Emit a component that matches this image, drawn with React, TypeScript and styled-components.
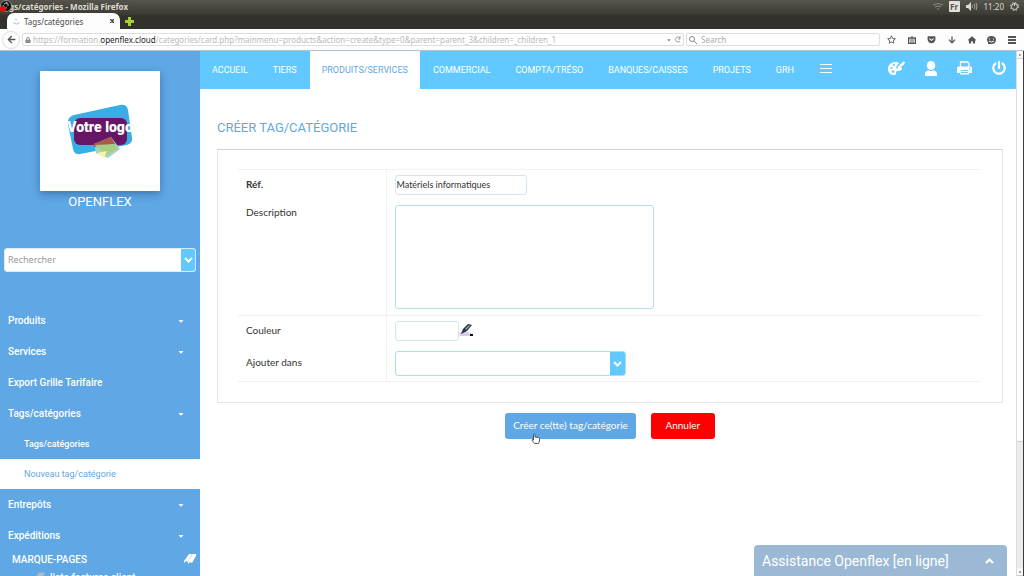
import React from "react";
import styled, { createGlobalStyle, css } from "styled-components";
import { FaArrowDown, FaArrowLeft, FaCaretDown, FaPowerOff, FaLock } from "react-icons/fa";
import { FaHouse, FaRegStar, FaGetPocket } from "react-icons/fa6";

const roboto = `Roboto, "Liberation Sans", sans-serif`;
const noto = `"Noto Sans", "Open Sans", sans-serif`;
const lato = `Lato, "Noto Sans", sans-serif`;
const blue = "#5fa7e5";
const sky = "#61c9ff";

const GlobalStyle = createGlobalStyle`
  * { box-sizing: border-box; }
  body { margin: 0; background: #fff; font-family: ${roboto}; overflow: hidden; }
  button, input, textarea, select { font: inherit; margin: 0; padding: 0; border: 0; background: none; outline: none; color: inherit; }
  a { color: inherit; text-decoration: none; }
  h1, p, ul { margin: 0; padding: 0; font-weight: 400; list-style: none; }
  svg { display: block; flex: none; }
`;

const Screen = styled.div`
  position: relative;
  display: flex;
  flex-direction: column;
  height: 100vh;
  overflow: hidden;
`;

/* ---------- browser window ---------- */

const WindowTop = styled.header`
  background: linear-gradient(#56544a, #3c3b35 14px, #32312c 16px, #32312c);
  font-family: ${noto};
  flex: none;
`;

const TitleBar = styled.div`
  display: flex;
  align-items: center;
  justify-content: space-between;
  height: 13px;
  padding: 0 5px 0 9px;
  color: #dfdbd2;
  font-size: 8px;
  line-height: 13px;
`;

const WindowTitle = styled.strong`
  font-weight: 700;
`;

const Tray = styled.div`
  display: flex;
  align-items: center;
  gap: 6px;
`;

const Lang = styled.span`
  width: 11px;
  height: 11px;
  border-radius: 1px;
  background: #e4e1da;
  color: #55534a;
  font-weight: 700;
  line-height: 11px;
  text-align: center;
`;

const TabStrip = styled.div`
  display: flex;
  align-items: center;
  gap: 5px;
  height: 16px;
  padding-left: 7px;
`;

const BrowserTab = styled.div`
  display: flex;
  align-items: center;
  gap: 4px;
  width: 113px;
  height: 16px;
  padding: 0 6px;
  border-radius: 7px 7px 0 0;
  background: #fdfdfd;
  color: #4a4a4a;
  font-size: 8px;
  line-height: 15px;
`;

const TabName = styled.span`
  flex: 1;
`;

const BarButton = styled.button`
  display: flex;
  align-items: center;
  justify-content: center;
`;

const AddressRow = styled.div`
  display: flex;
  align-items: center;
  gap: 2px;
  height: 22px;
  padding: 0 8px 0 2px;
  border-bottom: 1px solid #b7c3cc;
  background: #fdfdfd;
  color: #55544f;
`;

const BackButton = styled(BarButton)`
  width: 18px;
  height: 18px;
  border: 1px solid #dcdcdc;
  border-radius: 50%;
  background: #fff;
`;

const Field = styled.div<{ $grow?: boolean }>`
  display: flex;
  align-items: center;
  gap: 2px;
  height: 13px;
  border: 1px solid #dedede;
  border-radius: 2px;
  padding: 0 2px;
  background: #fff;
  color: #8c8c8c;
  font-size: 8px;
  line-height: 11px;
  ${(p) => (p.$grow ? css`flex: 1;` : css`flex: 0 1 194px;`)}
`;

const Url = styled.span`
  flex: 1;
  color: #b9b9b9;
  white-space: nowrap;
  overflow: hidden;
  b { font-weight: 400; color: #222; }
`;

const BrowserSearch = styled.input`
  flex: 1;
  min-width: 0;
  padding-left: 2px;
  &::placeholder { color: #aaa; opacity: 1; }
`;

const BrowserTools = styled.div`
  display: flex;
  align-items: center;
  justify-content: space-between;
  width: 134px;
  padding-left: 5px;
`;

/* ---------- page frame ---------- */

const Page = styled.div`
  display: flex;
  flex: 1;
  min-height: 0;
`;

const Sidebar = styled.aside`
  flex: none;
  width: 200px;
  overflow: hidden;
  background: ${blue};
  color: #fff;
`;

const Column = styled.div`
  display: flex;
  flex-direction: column;
  flex: 1;
  min-width: 0;
`;

const Scrollbar = styled.div`
  display: flex;
  flex-direction: column;
  align-items: center;
  width: 8px;
  border-right: 1px solid #3c3b37;
  border-left: 1px solid #dcdcda;
  background: #ececea;
`;

const ScrollCap = styled.div`
  width: 6px;
  height: 8px;
  padding: 3px 2px;
  border-bottom: 1px solid #d0d0ce;
  background: #fafafa;
  &::after { content: ""; display: block; width: 2px; height: 2px; background: #aaa; }
`;

const ScrollThumb = styled.div`
  width: 6px;
  flex: 0 0 73%;
  margin-bottom: auto;
  border-bottom: 1px solid #c8c8c6;
  border-radius: 0 0 2px 2px;
  background: #fff;
`;

/* ---------- sidebar ---------- */

const LogoCard = styled.div`
  display: flex;
  align-items: center;
  justify-content: center;
  width: 120px;
  height: 120px;
  margin: 20px auto 0;
  background: #fff;
  box-shadow: 0 3px 8px rgba(20, 60, 110, 0.45);
`;

const Company = styled.p`
  height: 22px;
  font-size: 13px;
  line-height: 22px;
  text-align: center;
`;

const SearchBox = styled.form`
  display: flex;
  height: 24px;
  margin: 35px 4px 33px;
  border: 1px solid #d8ecfa;
  border-radius: 3px;
  background: #fff;
  overflow: hidden;
`;

const SearchInput = styled.input`
  flex: 1;
  min-width: 0;
  padding: 0 0 2px 3px;
  font-family: ${noto};
  font-size: 9px;
  &::placeholder { color: #999; opacity: 1; }
`;

const ArrowButton = styled.button`
  display: flex;
  align-items: center;
  justify-content: center;
  width: 14px;
  background: ${sky};
  color: #fff;
`;

const MenuLink = styled.a`
  display: flex;
  align-items: center;
  justify-content: space-between;
  height: 31px;
  padding: 0 15px 0 8px;
  font-size: 10px;
  font-weight: 500;
`;

const SubLink = styled.a<{ $active?: boolean }>`
  display: flex;
  align-items: center;
  height: 30px;
  padding-left: 24px;
  font-size: 9px;
  font-weight: ${(p) => (p.$active ? 400 : 500)};
  background: ${(p) => (p.$active ? "#fff" : "transparent")};
  color: ${(p) => (p.$active ? blue : "#fff")};
`;

const Bookmarks = styled.div`
  display: flex;
  align-items: center;
  justify-content: space-between;
  height: 16px;
  padding: 0 4px 0 12px;
  font-size: 10px;
  font-weight: 500;
`;

const BookmarkLink = styled.a`
  display: flex;
  align-items: center;
  gap: 5px;
  height: 20px;
  padding-left: 34px;
  font-size: 10px;
  font-weight: 500;
`;

/* ---------- top menu ---------- */

const TopMenu = styled.nav`
  display: flex;
  justify-content: space-between;
  flex: none;
  height: 38px;
  background: ${sky};
  color: #fff;
`;

const MenuGroup = styled.div`
  display: flex;
  gap: 1px;
`;

const TopLink = styled.a<{ $active?: boolean }>`
  display: flex;
  align-items: center;
  padding: 0 12px;
  font-size: 9px;
  white-space: nowrap;
  background: ${(p) => (p.$active ? "#fff" : "transparent")};
  color: ${(p) => (p.$active ? blue : "#fff")};
`;

const MenuButton = styled.button`
  display: flex;
  align-items: center;
  padding: 0 13px 4px;
`;

const Actions = styled.div`
  display: flex;
  align-items: center;
  gap: 20px;
  padding: 0 10px 4px 0;
`;

/* ---------- form ---------- */

const Main = styled.main`
  flex: 1;
  padding: 28px 13px 0 17px;
`;

const Heading = styled.h1`
  height: 32px;
  font-size: 13px;
  line-height: 22px;
  color: ${blue};
`;

const Panel = styled.div`
  padding: 19px 21px 20px 20px;
  border: 1px solid #e6e6e6;
  border-top-color: #d2d2d2;
`;

const FormTable = styled.table`
  width: 100%;
  border-collapse: collapse;
  border-top: 1px solid #f2f2f2;
  font-family: ${lato};
  font-size: 10px;
  color: #333;
`;

const Row = styled.tr<{ $line?: boolean }>`
  border-bottom: ${(p) => (p.$line ? "1px solid #f0f0f0" : "0")};
`;

const LabelCell = styled.th<{ $strong?: boolean; $top?: boolean }>`
  width: 148px;
  padding: ${(p) => (p.$top ? "6px 0 0 8px" : "0 0 2px 8px")};
  border-right: 1px solid #f2f2f2;
  text-align: left;
  vertical-align: ${(p) => (p.$top ? "top" : "middle")};
  font-weight: ${(p) => (p.$strong ? 700 : 400)};
  line-height: 13px;
`;

const ValueCell = styled.td`
  padding: 5px 8px;
`;

const box = css`
  display: block;
  border: 1px solid #cfe8ee;
  border-radius: 3px;
  background: #fff;
`;

const TextInput = styled.input<{ $short?: boolean }>`
  ${box}
  width: ${(p) => (p.$short ? "64px" : "132px")};
  height: 20px;
  padding: 0 1px 1px;
  font-size: 9px;
`;

const TextArea = styled.textarea`
  ${box}
  width: 259px;
  height: 104px;
  border-color: #b4dfe4;
  margin-bottom: 1px;
  resize: none;
`;

const ColorLine = styled.div`
  display: flex;
`;

const SelectBox = styled.div`
  ${box}
  display: flex;
  width: 231px;
  height: 25px;
  border-color: #a9ddf5;
  overflow: hidden;
`;

const Select = styled.select`
  flex: 1;
  appearance: none;
`;

const SelectArrow = styled.span`
  display: flex;
  align-items: center;
  justify-content: center;
  width: 15px;
  background: ${sky};
  color: #fff;
`;

const Buttons = styled.div`
  display: flex;
  justify-content: center;
  gap: 15px;
  margin-top: 10px;
`;

const Button = styled.button<{ $danger?: boolean }>`
  position: relative;
  height: 26px;
  min-width: 64px;
  padding: 0 8px 3px;
  border-radius: 3px;
  background: ${(p) => (p.$danger ? "#f00" : blue)};
  color: #fff;
  font-family: ${lato};
  font-size: 10px;
  white-space: nowrap;
`;

const Pointer = styled.svg`
  position: absolute;
  left: 26px;
  top: 20px;
`;

const Recorder = styled.svg`
  position: absolute;
  left: 0;
  top: 0;
`;

const ChatButton = styled.button`
  position: absolute;
  right: 17px;
  bottom: 0;
  display: flex;
  align-items: center;
  justify-content: space-between;
  width: 253px;
  height: 31px;
  padding: 0 13px 0 8px;
  border-radius: 4px 4px 0 0;
  background: #9bb9d4;
  color: #fff;
  font-size: 14px;
`;

/* ---------- drawings ---------- */

const Chevron = ({ up }: { up?: boolean }) => (
  <svg width="9" height="6" viewBox="0 0 9 6" fill="none" stroke="currentColor" strokeWidth="2">
    <path d={up ? "M1 5 4.500 1.500 8 5" : "M1 1 4.500 4.500 8 1"} />
  </svg>
);

const Bars = ({ w, h, t }: { w: number; h: number; t: number }) => (
  <svg width={w} height={h} fill="currentColor">
    <rect width={w} height={t} />
    <rect y={(h - t) / 2} width={w} height={t} />
    <rect y={h - t} width={w} height={t} />
  </svg>
);

const Logo = () => (
  <svg width="68" height="56" viewBox="0 0 68 56">
    <path d="M8 12 54 2q7-1 8 5l4 28q1 5-5 7L14 51q-6 1-7-5L2 21q-1-7 6-9z" fill="#37aee6" />
    <rect x="8" y="15" width="53" height="27" rx="6" fill="#671665" />
    <path d="M28 41 45 34 54 46 42 55 30 50z" fill="#9ed3cf" />
    <path d="M28 41 45 34 49 41 28 44z" fill="#a85a48" />
    <path d="M29 42 49 41 52 46 40 52z" fill="#a8cd85" />
    <path d="M31 50 41 48 38 55z" fill="#f6f79a" />
    <text x="34" y="29" textAnchor="middle" fill="#fff" fontFamily="Roboto" fontWeight="900" fontSize="14">
      Votre logo
    </text>
  </svg>
);

const PaletteIcon = () => (
  <svg width="17" height="15" viewBox="0 0 17 15">
    <path d="M8 1C3 1 0 4 0 8c0 4 3 6 6 6 2 0 2-1 2-2 0-2 1-2 2-2 3 0 4-2 4-3L12 6l-3 2-1-2 3-4Q10 1 8 1z" fill="#fff" />
    <path d="M16.500 1 10 7" stroke="#fff" strokeWidth="2" />
    <path d="M12 3l4.500 0-4 3z" fill="#fff" />
    <g fill={sky}>
      <circle cx="3.500" cy="7" r="1.100" />
      <circle cx="6" cy="4" r="1.100" />
      <circle cx="5" cy="10.500" r="1.300" />
    </g>
  </svg>
);

const UserIcon = () => (
  <svg width="12" height="15" viewBox="0 0 12 15" fill="#fff">
    <ellipse cx="6" cy="4.500" rx="4.200" ry="4.500" />
    <path d="M0 15v-2q0-3.500 4-3.500 2 1 4 0 4 0 4 3.500v2z" />
  </svg>
);

const PrinterIcon = () => (
  <svg width="15" height="14" viewBox="0 0 15 14">
    <path d="M3.500 6V1h7l1.500 1.500V6" fill="none" stroke="#fff" strokeWidth="1.300" />
    <path d="M1.500 5.500h12q1.500 0 1.500 1.500v5h-3v1.500h-9V12H0V7q0-1.500 1.500-1.500z" fill="#fff" />
    <path d="M4 9.500h7M4 11.500h7" stroke={sky} />
    <circle cx="12.700" cy="7.500" r="0.700" fill={sky} />
  </svg>
);

const BookmarkIcon = () => (
  <svg width="12" height="10" viewBox="0 0 12 10" fill="#fff">
    <path d="M5 0h3L4 8 2 7 0 9V7z" />
    <path d="M8.500 0H12v2L8 9 6 8 4 10V8z" />
  </svg>
);

const PencilIcon = () => (
  <svg width="16" height="16" viewBox="0 0 16 16">
    <path d="M0 12 4 10 12 12 14 15H1z" fill="#dccbe4" />
    <path d="M2 13 4 8 9 3 13 4 8 10z" fill="#27304d" />
    <path d="M6 8 10 4 11 5 7 9z" fill="#8ea2a4" />
    <path d="M11 14h3" stroke="#111" strokeWidth="2" />
  </svg>
);

const WifiIcon = () => (
  <svg width="10" height="8" viewBox="0 0 10 8" fill="none" stroke="#8d8b82">
    <path d="M0 2q5-3 10 0M2 4q3-2 6 0M4 6h2" />
  </svg>
);

const VolumeIcon = () => (
  <svg width="12" height="9" viewBox="0 0 12 9" fill="none" stroke="#a9a79f">
    <path d="M0 3h2l3-3v9L2 6H0z" fill="#dfdbd2" stroke="none" />
    <path d="M6 3q1 1.500 0 3M8 2q2 2.500 0 5M10 1q2 3.500 0 7" />
  </svg>
);

const GearIcon = () => (
  <svg width="9" height="9" viewBox="0 0 9 9" fill="none" stroke="#dfdbd2">
    <circle cx="4.500" cy="4.500" r="3" />
    <circle cx="4.500" cy="4.500" r="4" strokeDasharray="1.500 1.640" />
    <path d="M4.500 1v3" />
  </svg>
);

const sections = [
  { name: "Produits", open: true },
  { name: "Services", open: true },
  { name: "Export Grille Tarifaire", open: false },
  { name: "Tags/catégories", open: true },
];

const topLinks = ["ACCUEIL", "TIERS", "PRODUITS/SERVICES", "COMMERCIAL", "COMPTA/TRÉSO", "BANQUES/CAISSES", "PROJETS", "GRH"];

const SideItem = ({ name, open = true }: { name: string; open?: boolean }) => (
  <MenuLink href="#">
    {name}
    {open && <FaCaretDown size={8} />}
  </MenuLink>
);

export default function App() {
  return (
    <Screen>
      <GlobalStyle />
      <WindowTop>
        <TitleBar>
          <WindowTitle>gs/catégories - Mozilla Firefox</WindowTitle>
          <Tray>
            <WifiIcon />
            <Lang>Fr</Lang>
            <VolumeIcon />
            <span>11:20</span>
            <GearIcon />
          </Tray>
        </TitleBar>
        <TabStrip>
          <BrowserTab>
            <svg width="7" height="7" viewBox="0 0 7 7" fill="none" stroke="#a9c7a2">
              <path d="M1 4q0 2 2.500 2T6 4M2 1l2 1" />
            </svg>
            <TabName>Tags/catégories</TabName>
            <BarButton aria-label="Fermer">
              <svg width="4" height="4" stroke="#444" strokeWidth="1.500">
                <path d="M0 0 4 4M4 0 0 4" />
              </svg>
            </BarButton>
          </BrowserTab>
          <BarButton aria-label="Nouvel onglet">
            <svg width="9" height="9" stroke="#a4d330" strokeWidth="3">
              <path d="M4.500 0v9M0 4.500h9" />
            </svg>
          </BarButton>
        </TabStrip>
        <AddressRow>
          <BackButton aria-label="Retour">
            <FaArrowLeft size={9} />
          </BackButton>
          <Field $grow>
            <FaLock size={6} />
            <Url>
              https://formation.<b>openflex.cloud</b>
              /categories/card.php?mainmenu=products&amp;action=create&amp;type=0&amp;parent=parent_3&amp;children=_children_1
            </Url>
            <FaCaretDown size={6} />
            <svg width="7" height="7" fill="none" stroke="#999">
              <path d="M6 2A2.500 2.500 0 1 0 6 5M6 0v3H4" />
            </svg>
          </Field>
          <Field>
            <svg width="8" height="8" fill="none" stroke="#888">
              <circle cx="3" cy="3" r="2.500" />
              <path d="M5 5 8 8" />
            </svg>
            <BrowserSearch aria-label="Search" placeholder="Search" />
          </Field>
          <BrowserTools>
            <FaRegStar size={9} />
            <svg width="8" height="8" fill="none" stroke="currentColor">
              <rect x="0.500" y="2" width="7" height="5.500" strokeWidth="1.500" />
              <path d="M3 1h2M2 4h4M2 6h4" />
            </svg>
            <FaGetPocket size={9} />
            <FaArrowDown size={8} />
            <FaHouse size={8} />
            <svg width="9" height="8" viewBox="0 0 9 8">
              <path d="M4.500 0C7 0 9 1.500 9 4S7 8 4.500 8L1 8 1 6Q0 5 0 4 0 0 4.500 0z" fill="currentColor" />
              <path d="M2 3h1M6 3h1M2 5q2.500 2 5 0" stroke="#fff" fill="none" />
            </svg>
            <Bars w={8} h={8} t={2} />
          </BrowserTools>
        </AddressRow>
      </WindowTop>

      <Page>
        <Sidebar>
          <LogoCard>
            <Logo />
          </LogoCard>
          <Company>OPENFLEX</Company>
          <SearchBox>
            <SearchInput aria-label="Rechercher" placeholder="Rechercher" />
            <ArrowButton type="button" aria-label="Ouvrir">
              <Chevron />
            </ArrowButton>
          </SearchBox>
          <nav>
            {sections.map((s) => (
              <SideItem key={s.name} {...s} />
            ))}
            <SubLink href="#">Tags/catégories</SubLink>
            <SubLink href="#" $active>
              Nouveau tag/catégorie
            </SubLink>
            <SideItem name="Entrepôts" />
            <SideItem name="Expéditions" />
          </nav>
          <Bookmarks>
            MARQUE-PAGES
            <BookmarkIcon />
          </Bookmarks>
          <BookmarkLink href="#">
            <svg width="11" height="10" viewBox="0 0 12 10" fill="#a9bccd">
              <path d="M5 0h7L8 9 6 8 4 10 0 9z" />
            </svg>
            liste factures client
          </BookmarkLink>
        </Sidebar>

        <Column>
          <TopMenu>
            <MenuGroup>
              {topLinks.map((t) => (
                <TopLink key={t} href="#" $active={t === "PRODUITS/SERVICES"}>
                  {t}
                </TopLink>
              ))}
              <MenuButton aria-label="Menu">
                <Bars w={12} h={9} t={1} />
              </MenuButton>
            </MenuGroup>
            <Actions>
              <BarButton aria-label="Thème">
                <PaletteIcon />
              </BarButton>
              <BarButton aria-label="Utilisateur">
                <UserIcon />
              </BarButton>
              <BarButton aria-label="Imprimer">
                <PrinterIcon />
              </BarButton>
              <BarButton aria-label="Déconnexion">
                <FaPowerOff size={14} />
              </BarButton>
            </Actions>
          </TopMenu>

          <Main>
            <Heading>CRÉER TAG/CATÉGORIE</Heading>
            <Panel>
              <FormTable>
                <tbody>
                  <Row>
                    <LabelCell scope="row" $strong>
                      <label htmlFor="ref">Réf.</label>
                    </LabelCell>
                    <ValueCell>
                      <TextInput id="ref" defaultValue="Matériels informatiques" />
                    </ValueCell>
                  </Row>
                  <Row $line>
                    <LabelCell scope="row" $top>
                      <label htmlFor="description">Description</label>
                    </LabelCell>
                    <ValueCell>
                      <TextArea id="description" />
                    </ValueCell>
                  </Row>
                  <Row>
                    <LabelCell scope="row">
                      <label htmlFor="couleur">Couleur</label>
                    </LabelCell>
                    <ValueCell>
                      <ColorLine>
                        <TextInput id="couleur" $short />
                        <PencilIcon />
                      </ColorLine>
                    </ValueCell>
                  </Row>
                  <Row $line>
                    <LabelCell scope="row">
                      <label htmlFor="parent">Ajouter dans</label>
                    </LabelCell>
                    <ValueCell>
                      <SelectBox>
                        <Select id="parent" />
                        <SelectArrow>
                          <Chevron />
                        </SelectArrow>
                      </SelectBox>
                    </ValueCell>
                  </Row>
                </tbody>
              </FormTable>
            </Panel>
            <Buttons>
              <Button>
                Créer ce(tte) tag/catégorie
                <Pointer width="9" height="11" viewBox="0 0 9 11">
                  <path d="M2.500 7V1.500q1-1 1.500 0V4l3.500.5 1 1V8l-1 2.500h-4L.8 7q0-1 1.700 0z" fill="#fff" stroke="#333" strokeWidth="0.800" />
                </Pointer>
              </Button>
              <Button $danger>Annuler</Button>
            </Buttons>
          </Main>
        </Column>

        <Scrollbar>
          <ScrollCap />
          <ScrollThumb />
          <ScrollCap />
        </Scrollbar>
      </Page>

      <ChatButton>
        Assistance Openflex [en ligne]
        <Chevron up />
      </ChatButton>
      <Recorder width="12" height="12" viewBox="0 0 12 12">
        <circle cx="6" cy="6" r="5.500" fill="#111" stroke="#ccc" strokeWidth="0.600" />
        <path d="M6 2q3 1 2 4M3 5q1 4 4 3M4 4q2-2 3 0" stroke="#bbb" fill="none" />
        <circle cx="3" cy="9" r="3" fill="#e01010" />
      </Recorder>
    </Screen>
  );
}
